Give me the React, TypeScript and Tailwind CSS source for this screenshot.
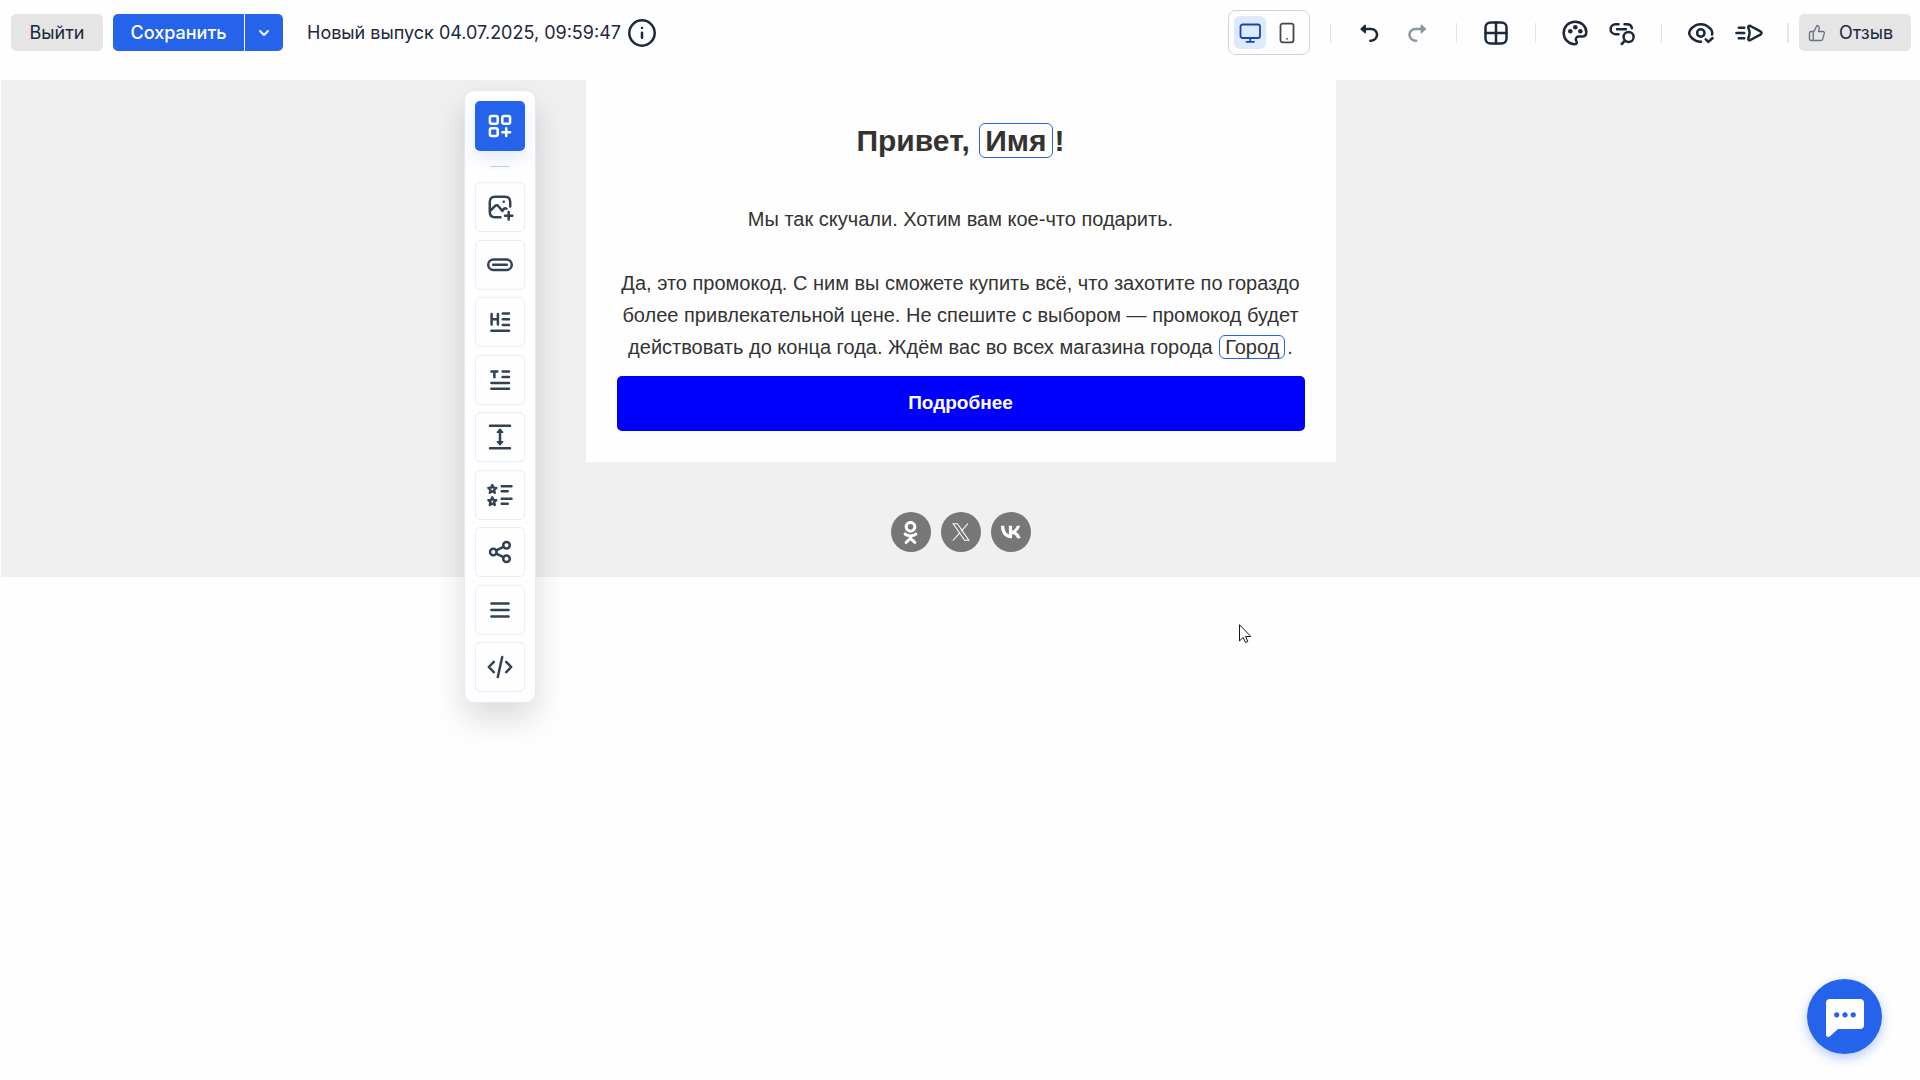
import type { ReactNode } from "react";
import { ChevronDown, ThumbsUp } from "lucide-react";
import { FaOdnoklassniki } from "react-icons/fa6";

function Glyph({ children, stroke = 2.5 }: { children: ReactNode; stroke?: number }) {
  return (
    <svg
      viewBox="0 0 30 30"
      className="size-[30px] shrink-0"
      fill="none"
      stroke="currentColor"
      strokeWidth={stroke}
      strokeLinecap="round"
      strokeLinejoin="round"
      aria-hidden="true"
    >
      {children}
    </svg>
  );
}

const undoShape = (
  <>
    <path d="M10 11h6.200a5.800 5.800 0 0 1 0 11.700h-.8" />
    <path d="M6 11l4.200-3.800v7.600z" fill="currentColor" strokeWidth="1.400" />
  </>
);

const star = "M0-4 1.2-1.3 4-1.1 1.9.9 2.5 3.8 0 2.3-2.5 3.8-1.9.9-4-1.1-1.2-1.3z";

const tools: { label: string; icon: ReactNode }[] = [
  {
    label: "Изображение",
    icon: (
      <>
        <path d="M25.2 14.5V10c0-3.6-1.6-5.2-5.2-5.2H10c-3.6 0-5.2 1.6-5.2 5.2v10c0 3.6 1.6 5.2 5.2 5.2h5.5" />
        <path d="m5.5 18.5 4.700-4.700c.9-.9 2.200-.8 3 .2l4.200 5M17.300 18.500l1.500-1.500c.9-.9 1.600-1 2.700-.3" />
        <path d="M18.700 9.700h.1M23.700 20v7.400M20 23.700h7.400" />
      </>
    ),
  },
  {
    label: "Кнопка",
    icon: (
      <>
        <rect x="3.2" y="9.5" width="23.600" height="10.500" rx="5.250" />
        <path d="M8.200 14.750h13.600" />
      </>
    ),
  },
  {
    label: "Заголовок",
    icon: <path d="M6.600 7v10.500M12.900 7v10.500M6.600 12.200h6.300M17.800 6.500H24M17.800 12.200H24M17.800 18H24M6.400 23.700H24" />,
  },
  {
    label: "Текст",
    icon: <path d="M6.400 6.400h6M9.400 6.400v5.800M17.600 6.400H24M17.600 12H24M6.400 18H24M6.400 23.700H24" />,
  },
  {
    label: "Отступ",
    icon: (
      <>
        <path d="M5 3.700h20M5 26.300h20M15 8v14" />
        <path d="M15 7.400l2.700 2.900h-5.400zM15 22.600l2.700-2.900h-5.400z" fill="currentColor" strokeWidth="1.500" />
      </>
    ),
  },
  {
    label: "Список",
    icon: (
      <>
        <path d={star} transform="translate(7.3 9)" strokeWidth="2.3" />
        <path d={star} transform="translate(7.3 21.3)" strokeWidth="2.3" />
        <path d="M16.700 6.300h9.800M16.700 11.300h6M16.700 18.700h9.800M16.700 23.700h6" />
      </>
    ),
  },
  {
    label: "Соцсети",
    icon: (
      <>
        <circle cx="8.300" cy="15" r="3.300" />
        <circle cx="21.500" cy="8.300" r="3.300" />
        <circle cx="21.500" cy="21.700" r="3.300" />
        <path d="m11.400 13.400 7-3.500M11.400 16.600l7 3.500" />
      </>
    ),
  },
  { label: "Меню", icon: <path d="M6.400 8.400h17.200M6.400 15h17.200M6.400 21.600h17.200" /> },
  {
    label: "HTML",
    icon: <path d="m8.800 9.800-5 5.200 5 5.200M21.200 9.800l5 5.200-5 5.200M17.200 5l-4.400 20" />,
  },
];

function IconButton({ label, muted, children }: { label: string; muted?: boolean; children: ReactNode }) {
  return (
    <button type="button" aria-label={label} className={muted ? "text-[#8b95a3]" : "text-[#1c283b]"}>
      <Glyph>{children}</Glyph>
    </button>
  );
}

function Group({ children }: { children: ReactNode }) {
  return (
    <div className="flex items-center">
      <div className="h-5 w-px bg-[#dbe4f0]" />
      <div className="flex gap-[17px] px-6">{children}</div>
    </div>
  );
}

function Toolbar() {
  return (
    <div className="flex items-center">
      <div className="mr-5 flex h-[45px] w-[82px] items-center justify-between rounded-lg border border-[#cfd2da] pr-1.5 pl-[5px]">
        <button
          type="button"
          aria-label="Компьютер"
          aria-pressed="true"
          className="flex h-[33px] w-8 items-center justify-center rounded-md bg-[#dbeafe] text-[#1e40af]"
        >
          <svg viewBox="0 0 24 24" className="size-6" fill="none" stroke="currentColor" strokeWidth="1.8" strokeLinecap="round" strokeLinejoin="round">
            <rect x="2.500" y="3.500" width="19.500" height="13.500" rx="2" />
            <path d="M12.200 17v3.800M8.500 20.800h7.500" />
          </svg>
        </button>
        <button type="button" aria-label="Телефон" aria-pressed="false" className="flex h-[33px] w-8 items-center justify-center text-[#46464f]">
          <svg viewBox="0 0 24 24" className="size-6" fill="none" stroke="currentColor" strokeWidth="1.8" strokeLinecap="round" strokeLinejoin="round">
            <rect x="5.500" y="2.700" width="13" height="18.600" rx="2" />
            <path d="M12 17.800h.1" />
          </svg>
        </button>
      </div>

      <Group>
        <IconButton label="Отменить">{undoShape}</IconButton>
        <IconButton label="Повторить" muted>
          <g transform="translate(29.5 0) scale(-1 1)">{undoShape}</g>
        </IconButton>
      </Group>
      <Group>
        <IconButton label="Сетка">
          <rect x="4.500" y="4.500" width="21" height="21" rx="5" />
          <path d="M15 4.500v21M4.500 15h21" />
        </IconButton>
      </Group>
      <Group>
        <IconButton label="Стили">
          <path d="M15 3.700C8.700 3.700 3.700 8.700 3.700 15c0 6.200 5 11.200 10.900 11.300 2.300 0 2.600-1.500 1.800-3.100-1.300-2.500-.2-4.600 2.300-4.600h2.900c3 0 4.700-1.600 4.700-4.400C26.300 8 21.200 3.700 15 3.700z" />
          <g fill="currentColor" stroke="none">
            <circle cx="10.300" cy="13.300" r="2.300" />
            <circle cx="15.300" cy="9.300" r="2.300" />
            <circle cx="20.300" cy="13.300" r="2.300" />
          </g>
        </IconButton>
        <IconButton label="Проверить ссылки">
          <path d="M11.500 6.200H8.600a5 5 0 0 0 0 10h2.900M17.500 6.200h2.400c2.700 0 4.600 1.500 5 4M10 11.200h9" />
          <circle cx="21.600" cy="19" r="5" />
          <path d="m18 22.700-3.300 3.300" />
        </IconButton>
      </Group>
      <Group>
        <IconButton label="Предпросмотр">
          <path d="M15 23.800c-4.500 0-7.600-2-10-4.700C2.800 16.600 2.800 13.400 5 10.900c2.400-2.700 5.500-4.700 9.800-4.700s7.400 2 9.800 4.700c1.500 1.700 2 3.600 1.500 5.600" />
          <circle cx="14.800" cy="15" r="3.700" />
          <path d="m19.700 21.400 2.700 2.500 4.200-3.900" />
        </IconButton>
        <IconButton label="Отправить тест">
          <path d="M5.800 9.700h5.400M3.400 15h7.800M5.800 20.300h5.400" />
          <path d="M15.400 9.700c-.4-1.600.6-2.300 2-1.700l10 5.400c1.600.8 1.600 2.400 0 3.200l-10 5.400c-1.400.6-2.400-.1-2-1.700l1-3.700c.3-1.100.3-2.100 0-3.200z" />
        </IconButton>
      </Group>
      <div className="mr-2.5 h-5 w-0.5 bg-[#e0e7f1]" />
      <button type="button" className="flex h-[37px] w-28 items-center gap-3 rounded-[5px] bg-[#e5e5e5] pl-2 text-lg text-[#1c283b]">
        <span className="flex size-5 items-center justify-center">
          <ThumbsUp className="size-[18px] text-gray-500" strokeWidth={1.8} />
        </span>
        Отзыв
      </button>
    </div>
  );
}

function Chip({ children }: { children: ReactNode }) {
  return (
    <span className="mr-0.5 ml-px inline-block rounded-md border border-[#2563eb] px-[5px] leading-[1.1]">{children}</span>
  );
}

function XLogo() {
  return (
    <svg viewBox="0 0 18 18" className="size-[18px]" fill="none" stroke="currentColor" strokeWidth="1.1">
      <path d="M1.200.8h4.200l11.400 16.400h-4.200zM16 .5l-6.800 7.800M8 9.700.900 17.500" />
    </svg>
  );
}

function VkLogo() {
  return (
    <svg viewBox="0 0 24 24" className="size-6" fill="currentColor">
      <path d="M12.800 18.300c-6.800 0-10.700-4.700-10.900-12.500h3.400c.1 5.700 2.600 8.100 4.600 8.600V5.800h3.200v4.900c2-.2 4-2.400 4.700-4.900H21c-.5 3-2.800 5.200-4.300 6.100 1.600.7 4 2.700 5 6.400h-3.500c-.8-2.400-2.700-4.200-5.100-4.400v4.400z" />
    </svg>
  );
}

const socials: { label: string; icon: ReactNode }[] = [
  { label: "Одноклассники", icon: <FaOdnoklassniki className="size-[23px]" /> },
  { label: "X", icon: <XLogo /> },
  { label: "ВКонтакте", icon: <VkLogo /> },
];

export default function App() {
  return (
    <div className="relative min-h-screen bg-[#fefefe] font-[Inter,sans-serif] text-[#1c283b]">
      <header className="flex h-20 items-start justify-between pt-[10px] pr-[9px] pl-[11px]">
        <div className="flex h-[45px] items-center">
          <button type="button" className="h-[37px] w-[92px] rounded-[5px] bg-[#e5e5e5] text-lg">
            Выйти
          </button>
          <div className="ml-2.5 flex h-[37px] gap-px text-white">
            <button type="button" className="w-[131px] rounded-l-[5px] bg-[#2563eb] text-lg font-medium">
              Сохранить
            </button>
            <button type="button" aria-label="Другие действия" className="flex w-[38px] items-center justify-center rounded-r-[5px] bg-[#2563eb]">
              <ChevronDown className="size-4" strokeWidth={2.8} />
            </button>
          </div>
          <span className="ml-6 text-lg whitespace-nowrap">Новый выпуск 04.07.2025, 09:59:47</span>
          <button type="button" aria-label="Информация" className="ml-1.5">
            <Glyph>
              <circle cx="15" cy="15" r="12.700" />
              <path d="M15 14.800v5M15 10.100v-.1" />
            </Glyph>
          </button>
        </div>
        <Toolbar />
      </header>

      <main className="relative ml-px bg-[#f0f0f0]">
        <article className="mx-auto w-full max-w-[750px] bg-[#fefefe] px-[31px] pt-[37px] pb-[31px] text-center font-['Liberation_Sans',Arial,sans-serif] text-xl leading-8 text-[#333333]">
          <h1 className="text-3xl leading-[48px] font-bold">
            Привет, <Chip>Имя</Chip>!
          </h1>
          <p className="mt-[38px]">Мы так скучали. Хотим вам кое-что подарить.</p>
          <p className="mt-8">
            Да, это промокод. С ним вы сможете купить всё, что захотите по гораздо более привлекательной цене. Не спешите
            с выбором — промокод будет действовать до конца года. Ждём вас во всех магазина города <Chip>Город</Chip>.
          </p>
          <a href="#details" className="mt-[13px] block rounded-[5px] bg-[#0000ff] pt-2.5 pb-3 text-[19px] leading-[33px] font-bold text-white">
            Подробнее
          </a>
        </article>
        <nav aria-label="Социальные сети" className="flex justify-center gap-2.5 pt-[50px] pb-[25px]">
          {socials.map((s) => (
            <a key={s.label} href="#social" aria-label={s.label} className="flex size-10 items-center justify-center rounded-full bg-[#777777] text-white">
              {s.icon}
            </a>
          ))}
        </nav>

        <aside
          aria-label="Блоки"
          className="absolute top-[10px] left-[463px] flex w-[72px] flex-col items-center rounded-[10px] border border-[#e2e8f8] bg-[#fefefe] py-2.5 shadow-[0_16px_32px_rgba(0,0,0,0.14)]"
        >
          <button
            type="button"
            aria-label="Добавить блок"
            className="flex size-[50px] items-center justify-center rounded-[5px] bg-[#2563eb] text-white shadow-[0_8px_16px_rgba(37,99,235,0.12)]"
          >
            <Glyph>
              <rect x="4.900" y="4.900" width="7.800" height="7.800" rx="1.800" />
              <rect x="17.300" y="4.900" width="7.800" height="7.800" rx="1.800" />
              <rect x="4.900" y="17.300" width="7.800" height="7.800" rx="1.800" />
              <path d="M21.200 17.300v7.800M17.300 21.200h7.800" />
            </Glyph>
          </button>
          <div className="my-[15px] h-px w-5 bg-[#c3cddb]" />
          <div className="flex h-[510px] flex-col justify-between">
            {tools.map((tool) => (
              <button
                key={tool.label}
                type="button"
                aria-label={tool.label}
                className="flex size-[50px] items-center justify-center rounded-[5px] border border-[#e9eefa] text-[#334155]"
              >
                <Glyph>{tool.icon}</Glyph>
              </button>
            ))}
          </div>
        </aside>
      </main>

      <svg viewBox="0 0 13 20" className="absolute top-[624px] left-[1239px] h-5 w-[13px]" fill="white" stroke="#15151f" strokeWidth="1" aria-hidden="true">
        <path d="M.5.7v16.200l3.700-3.500 2.300 5.100 2.300-1-2.200-5h5.200z" />
      </svg>

      <button
        type="button"
        aria-label="Чат"
        className="fixed right-[38px] bottom-[26px] flex size-[75px] items-center justify-center rounded-full bg-[#2563eb] text-white shadow-[0_4px_12px_rgba(37,99,235,0.35)]"
      >
        <svg viewBox="0 0 38 38" className="mt-0.5 size-[38px]" aria-hidden="true">
          <path d="M4 0h30a4 4 0 0 1 4 4v22a4 4 0 0 1-4 4H12l-8 7.200C2.400 38.600 0 38 0 35.500V4a4 4 0 0 1 4-4z" fill="currentColor" />
          <g fill="#2563eb">
            <circle cx="10.700" cy="15.800" r="2.600" />
            <circle cx="19" cy="15.800" r="2.600" />
            <circle cx="27.200" cy="15.800" r="2.600" />
          </g>
        </svg>
      </button>
    </div>
  );
}
